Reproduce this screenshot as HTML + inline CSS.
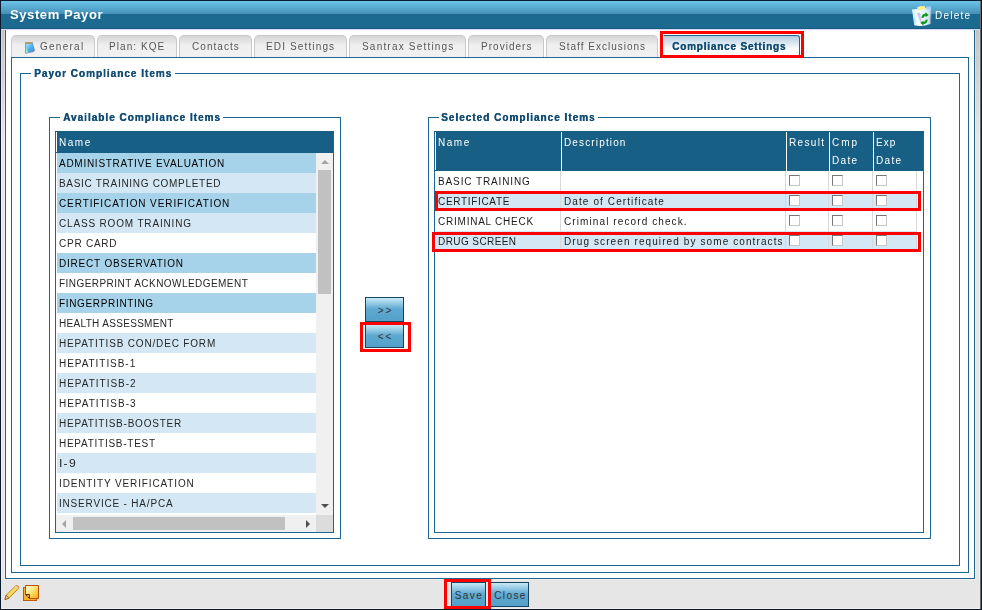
<!DOCTYPE html>
<html><head><meta charset="utf-8">
<style>
*{margin:0;padding:0;box-sizing:border-box}
html,body{width:982px;height:610px;overflow:hidden;background:#e8e8e8}
body{position:relative;font-family:"Liberation Sans",sans-serif;font-size:10px;color:#222}
.a{position:absolute}
.ln{position:absolute;background:#1d6690}
.txt{position:absolute;white-space:nowrap;line-height:12px;will-change:transform}
.up{letter-spacing:0.75px}
.lo{letter-spacing:1.1px}
.tab{position:absolute;top:35px;height:22px;border:1px solid #c9c9c9;border-bottom:none;border-radius:5px 5px 0 0;background:linear-gradient(#d6d6d6,#efefef 45%,#f1f1f1)}
.leg{font-weight:bold;color:#124d74;letter-spacing:1.0px;text-shadow:0.4px 0 0 #124d74}
.hdr{color:#fff;margin-top:1px;letter-spacing:1.2px}
.btn{position:absolute;border:1px solid #17445f;background:linear-gradient(#c8e9f7,#5ea9d1 48%,#55a0c9);color:#333;text-align:center;line-height:22px;letter-spacing:1.2px;white-space:nowrap}
.cb{position:absolute;width:11px;height:11px;border:1px solid #777;border-right-color:#c8c8c8;border-bottom-color:#c8c8c8;background:#fff}
.tabt{color:#555;letter-spacing:1.15px}
</style></head><body>
<!-- outer dark frame -->
<div class="a" style="left:0;top:0;width:982px;height:610px;background:#e6e6e6;border:1px solid #0a1a30"></div>
<div class="a" style="left:980px;top:1px;width:1px;height:608px;background:#6a6a6a"></div>
<div class="a" style="left:1px;top:608px;width:979px;height:1px;background:#f3f1ee"></div>
<!-- title bar -->
<div class="a" style="left:1px;top:1px;width:979px;height:13px;background:linear-gradient(#6cc4e8,#4590b8)"></div>
<div class="a" style="left:1px;top:14px;width:979px;height:14px;background:#1c6a8f"></div>
<div class="a" style="left:1px;top:28px;width:979px;height:1px;background:#155c80"></div>
<div class="a" style="left:1px;top:29px;width:979px;height:1px;background:#d0d8ff"></div>
<div class="txt" style="left:10px;top:9px;font-size:12px;font-weight:bold;color:#fff;letter-spacing:0.5px;line-height:12px;transform:scaleX(1.09);transform-origin:0 0">System Payor</div>
<div class="txt" style="left:935px;top:10px;font-size:10px;color:#fff;letter-spacing:1.25px">Delete</div>

<!-- side strips -->
<div class="a" style="left:1px;top:30px;width:4px;height:550px;background:linear-gradient(#c4c4c4,#e6e6e6 110px)"></div>
<div class="a" style="left:1px;top:30px;width:1px;height:550px;background:linear-gradient(#d8d4d0,#f5f3f0 110px)"></div>
<div class="a" style="left:4px;top:30px;width:1px;height:550px;background:linear-gradient(#d8d4d0,#f3efec 110px)"></div>
<div class="a" style="left:975px;top:30px;width:5px;height:550px;background:linear-gradient(#c4c4c4,#e6e6e6 110px)"></div>
<div class="a" style="left:975px;top:30px;width:1px;height:550px;background:linear-gradient(#d8d4d0,#f3efec 110px)"></div>
<div class="a" style="left:979px;top:30px;width:1px;height:550px;background:linear-gradient(#d0d0d0,#f0f0f0 110px)"></div>
<!-- white container -->
<div class="a" style="left:5px;top:30px;width:970px;height:549px;background:#fff;border-left:1px solid #1d6690;border-right:1px solid #1d6690;border-bottom:1px solid #1d6690"></div>
<div class="a" style="left:4px;top:579px;width:972px;height:1px;background:#f3efec"></div>

<!-- tabs -->
<div class="tab" style="left:11px;width:84px"></div>
<div class="txt tabt" style="left:40px;top:41px;letter-spacing:1.26px">General</div>
<div class="tab" style="left:97px;width:80px"></div>
<div class="txt tabt" style="left:109px;top:41px;letter-spacing:1.06px">Plan: KQE</div>
<div class="tab" style="left:179px;width:73px"></div>
<div class="txt tabt" style="left:192px;top:41px;letter-spacing:1.05px">Contacts</div>
<div class="tab" style="left:254px;width:93px"></div>
<div class="txt tabt" style="left:266px;top:41px;letter-spacing:1.14px">EDI Settings</div>
<div class="tab" style="left:349px;width:117px"></div>
<div class="txt tabt" style="left:362px;top:41px;letter-spacing:1.20px">Santrax Settings</div>
<div class="tab" style="left:468px;width:76px"></div>
<div class="txt tabt" style="left:481px;top:41px;letter-spacing:1.03px">Providers</div>
<div class="tab" style="left:546px;width:112px"></div>
<div class="txt tabt" style="left:559px;top:41px;letter-spacing:1.01px">Staff Exclusions</div>
<div class="a" style="left:20px;top:38px;width:20px;height:20px"><svg width="20" height="20" viewBox="0 0 20 20">
<defs><linearGradient id="gi" x1="0" y1="0" x2="1" y2="1"><stop offset="0" stop-color="#a8ecff"/><stop offset="0.5" stop-color="#4cb0ec"/><stop offset="1" stop-color="#3a88d8"/></linearGradient></defs>
<path d="M5 4.5 L12.5 4.2 L15 12.5 L13.5 14 L5.2 15.8 Z" fill="#7088b8"/>
<path d="M5.8 5.6 L12.2 5.6 L14.3 12.6 L6 15 Z" fill="url(#gi)"/>
<path d="M5.8 9 L8.5 14.6 L6 15 Z" fill="#b8f0c0" opacity="0.8"/>
<rect x="5.5" y="4" width="7" height="1.8" fill="#b09a68"/>
</svg></div>
<div class="a" style="left:11px;top:57px;width:958px;height:516px;border:1px solid #1d6690;border-top-color:#1d6690"></div>
<div class="a" style="left:663px;top:35px;width:137px;height:23px;border:1px solid #1d6690;border-bottom:none;border-left-color:#fff;border-radius:0 3px 0 0;background:linear-gradient(#b5cde0,#fff 62%)"></div>
<div class="txt" style="left:672px;top:41px;font-weight:bold;color:#124d74;letter-spacing:0.8px;text-shadow:0.4px 0 0 #124d74">Compliance Settings</div>
<div class="a" style="left:660px;top:31px;width:144px;height:27px;border:3px solid #f00"></div>

<!-- fieldsets -->
<div class="a" style="left:20px;top:73px;width:940px;height:493px;border:1px solid #1d6690;border-top:none"></div>
<div class="ln" style="left:20px;top:73px;width:11px;height:1px"></div>
<div class="ln" style="left:175px;top:73px;width:785px;height:1px"></div>
<div class="txt leg" style="left:34px;top:68px">Payor Compliance Items</div>
<div class="a" style="left:49px;top:117px;width:292px;height:422px;border:1px solid #1d6690;border-top:none"></div>
<div class="ln" style="left:49px;top:117px;width:11px;height:1px"></div>
<div class="ln" style="left:223px;top:117px;width:118px;height:1px"></div>
<div class="txt leg" style="left:63px;top:112px">Available Compliance Items</div>
<div class="a" style="left:428px;top:117px;width:503px;height:422px;border:1px solid #1d6690;border-top:none"></div>
<div class="ln" style="left:428px;top:117px;width:11px;height:1px"></div>
<div class="ln" style="left:598px;top:117px;width:333px;height:1px"></div>
<div class="txt leg" style="left:441px;top:112px">Selected Compliance Items</div>

<!-- available table -->
<div class="a" style="left:55px;top:131px;width:279px;height:402px;border:1px solid #1d6690;background:#fff"></div>
<div class="a" style="left:56px;top:131px;width:277px;height:22px;background:#175f85"></div>
<div class="a" style="left:56px;top:132px;width:1px;height:20px;background:#fff"></div>
<div class="txt hdr" style="left:59px;top:136px;letter-spacing:1.53px">Name</div>
<div class="a" style="left:57px;top:153px;width:259px;height:20px;background:#a6d2ea"></div>
<div class="txt up" style="left:59px;top:158px;color:#000;letter-spacing:0.73px">ADMINISTRATIVE EVALUATION</div>
<div class="a" style="left:57px;top:173px;width:259px;height:20px;background:#d3e8f4"></div>
<div class="txt up" style="left:59px;top:178px;color:#262626;letter-spacing:0.7px">BASIC TRAINING COMPLETED</div>
<div class="a" style="left:57px;top:193px;width:259px;height:20px;background:#a6d2ea"></div>
<div class="txt up" style="left:59px;top:198px;color:#000;letter-spacing:0.9px">CERTIFICATION VERIFICATION</div>
<div class="a" style="left:57px;top:213px;width:259px;height:20px;background:#d3e8f4"></div>
<div class="txt up" style="left:59px;top:218px;color:#262626;letter-spacing:0.83px">CLASS ROOM TRAINING</div>
<div class="a" style="left:57px;top:233px;width:259px;height:20px;background:#fff"></div>
<div class="txt up" style="left:59px;top:238px;color:#262626;letter-spacing:0.76px">CPR CARD</div>
<div class="a" style="left:57px;top:253px;width:259px;height:20px;background:#a6d2ea"></div>
<div class="txt up" style="left:59px;top:258px;color:#000;letter-spacing:0.8px">DIRECT OBSERVATION</div>
<div class="a" style="left:57px;top:273px;width:259px;height:20px;background:#fff"></div>
<div class="txt up" style="left:59px;top:278px;color:#262626;letter-spacing:0.45px">FINGERPRINT ACKNOWLEDGEMENT</div>
<div class="a" style="left:57px;top:293px;width:259px;height:20px;background:#a6d2ea"></div>
<div class="txt up" style="left:59px;top:298px;color:#000;letter-spacing:0.66px">FINGERPRINTING</div>
<div class="a" style="left:57px;top:313px;width:259px;height:20px;background:#fff"></div>
<div class="txt up" style="left:59px;top:318px;color:#262626;letter-spacing:0.32px">HEALTH ASSESSMENT</div>
<div class="a" style="left:57px;top:333px;width:259px;height:20px;background:#d3e8f4"></div>
<div class="txt up" style="left:59px;top:338px;color:#262626;letter-spacing:0.83px">HEPATITISB CON/DEC FORM</div>
<div class="a" style="left:57px;top:353px;width:259px;height:20px;background:#fff"></div>
<div class="txt up" style="left:59px;top:358px;color:#262626;letter-spacing:0.95px">HEPATITISB-1</div>
<div class="a" style="left:57px;top:373px;width:259px;height:20px;background:#d3e8f4"></div>
<div class="txt up" style="left:59px;top:378px;color:#262626;letter-spacing:0.99px">HEPATITISB-2</div>
<div class="a" style="left:57px;top:393px;width:259px;height:20px;background:#fff"></div>
<div class="txt up" style="left:59px;top:398px;color:#262626;letter-spacing:0.98px">HEPATITISB-3</div>
<div class="a" style="left:57px;top:413px;width:259px;height:20px;background:#d3e8f4"></div>
<div class="txt up" style="left:59px;top:418px;color:#262626;letter-spacing:0.77px">HEPATITISB-BOOSTER</div>
<div class="a" style="left:57px;top:433px;width:259px;height:20px;background:#fff"></div>
<div class="txt up" style="left:59px;top:438px;color:#262626;letter-spacing:0.74px">HEPATITISB-TEST</div>
<div class="a" style="left:57px;top:453px;width:259px;height:20px;background:#d3e8f4"></div>
<div class="txt up" style="left:59px;top:458px;color:#262626;letter-spacing:1px;transform:scaleX(1.22);transform-origin:0 0">I-9</div>
<div class="a" style="left:57px;top:473px;width:259px;height:20px;background:#fff"></div>
<div class="txt up" style="left:59px;top:478px;color:#262626;letter-spacing:0.87px">IDENTITY VERIFICATION</div>
<div class="a" style="left:57px;top:493px;width:259px;height:20px;background:#d3e8f4"></div>
<div class="txt up" style="left:59px;top:498px;color:#262626;letter-spacing:0.81px">INSERVICE - HA/PCA</div>
<div class="a" style="left:316px;top:153px;width:17px;height:362px;background:#f0f0f0"></div>
<div class="a" style="left:318px;top:170px;width:13px;height:124px;background:#c1c1c1"></div>
<div class="a" style="left:321px;top:160px;width:0;height:0;border-left:4px solid transparent;border-right:4px solid transparent;border-bottom:4px solid #a3a3a3"></div>
<div class="a" style="left:321px;top:504px;width:0;height:0;border-left:4px solid transparent;border-right:4px solid transparent;border-top:4px solid #505050"></div>
<div class="a" style="left:56px;top:513px;width:260px;height:2px;background:#fff"></div>
<div class="a" style="left:56px;top:515px;width:260px;height:17px;background:#f0f0f0"></div>
<div class="a" style="left:73px;top:517px;width:212px;height:13px;background:#c1c1c1"></div>
<div class="a" style="left:62px;top:520px;width:0;height:0;border-top:4px solid transparent;border-bottom:4px solid transparent;border-right:4px solid #a3a3a3"></div>
<div class="a" style="left:306px;top:520px;width:0;height:0;border-top:4px solid transparent;border-bottom:4px solid transparent;border-left:4px solid #505050"></div>
<div class="a" style="left:316px;top:515px;width:17px;height:17px;background:#dcdcdc"></div>

<!-- move buttons -->
<div class="btn" style="left:365px;top:297px;width:39px;height:25px;padding-top:2px;letter-spacing:2px;text-indent:2px">&gt;&gt;</div>
<div class="btn" style="left:365px;top:324px;width:39px;height:24px;padding-top:1px;letter-spacing:2px;text-indent:2px">&lt;&lt;</div>
<div class="a" style="left:360px;top:322px;width:51px;height:30px;border:3px solid #f00"></div>

<!-- selected table -->
<div class="a" style="left:434px;top:131px;width:490px;height:402px;border:1px solid #1d6690;background:#fff"></div>
<div class="a" style="left:435px;top:131px;width:488px;height:40px;background:#175f85"></div>
<div class="a" style="left:435px;top:132px;width:1px;height:38px;background:#fff"></div>
<div class="a" style="left:561px;top:132px;width:1px;height:39px;background:#fff"></div>
<div class="a" style="left:786px;top:132px;width:1px;height:39px;background:#fff"></div>
<div class="a" style="left:829px;top:132px;width:1px;height:39px;background:#fff"></div>
<div class="a" style="left:873px;top:132px;width:1px;height:39px;background:#fff"></div>
<div class="txt hdr" style="left:438px;top:136px;letter-spacing:1.53px">Name</div>
<div class="txt hdr" style="left:564px;top:136px;letter-spacing:1.14px">Description</div>
<div class="txt hdr" style="left:789px;top:136px;letter-spacing:1.35px">Result</div>
<div class="txt hdr" style="left:832px;top:136px;letter-spacing:1.97px">Cmp</div>
<div class="txt hdr" style="left:832px;top:154px;letter-spacing:1.31px">Date</div>
<div class="txt hdr" style="left:876px;top:136px;letter-spacing:1.07px">Exp</div>
<div class="txt hdr" style="left:876px;top:154px;letter-spacing:1.31px">Date</div>
<div class="a" style="left:436px;top:171px;width:481px;height:20px;background:#fff"></div>
<div class="a" style="left:560px;top:171px;width:1px;height:20px;background:#d9d9d9"></div>
<div class="a" style="left:785px;top:171px;width:1px;height:20px;background:#d9d9d9"></div>
<div class="a" style="left:828px;top:171px;width:1px;height:20px;background:#d9d9d9"></div>
<div class="a" style="left:872px;top:171px;width:1px;height:20px;background:#d9d9d9"></div>
<div class="a" style="left:916px;top:171px;width:1px;height:20px;background:#d9d9d9"></div>
<div class="txt up" style="left:438px;top:176px;color:#1a1a1a;letter-spacing:0.88px">BASIC TRAINING</div>
<div class="cb" style="left:789px;top:175px"></div>
<div class="cb" style="left:832px;top:175px"></div>
<div class="cb" style="left:876px;top:175px"></div>
<div class="a" style="left:436px;top:191px;width:481px;height:20px;background:#d3e8f4"></div>
<div class="a" style="left:560px;top:191px;width:1px;height:20px;background:#d9d9d9"></div>
<div class="a" style="left:785px;top:191px;width:1px;height:20px;background:#d9d9d9"></div>
<div class="a" style="left:828px;top:191px;width:1px;height:20px;background:#d9d9d9"></div>
<div class="a" style="left:872px;top:191px;width:1px;height:20px;background:#d9d9d9"></div>
<div class="a" style="left:916px;top:191px;width:1px;height:20px;background:#d9d9d9"></div>
<div class="txt up" style="left:438px;top:196px;color:#1a1a1a;letter-spacing:0.68px">CERTIFICATE</div>
<div class="txt lo" style="left:564px;top:196px;color:#1a1a1a">Date of Certificate</div>
<div class="cb" style="left:789px;top:195px"></div>
<div class="cb" style="left:832px;top:195px"></div>
<div class="cb" style="left:876px;top:195px"></div>
<div class="a" style="left:436px;top:211px;width:481px;height:20px;background:#fff"></div>
<div class="a" style="left:560px;top:211px;width:1px;height:20px;background:#d9d9d9"></div>
<div class="a" style="left:785px;top:211px;width:1px;height:20px;background:#d9d9d9"></div>
<div class="a" style="left:828px;top:211px;width:1px;height:20px;background:#d9d9d9"></div>
<div class="a" style="left:872px;top:211px;width:1px;height:20px;background:#d9d9d9"></div>
<div class="a" style="left:916px;top:211px;width:1px;height:20px;background:#d9d9d9"></div>
<div class="txt up" style="left:438px;top:216px;color:#1a1a1a;letter-spacing:0.77px">CRIMINAL CHECK</div>
<div class="txt lo" style="left:564px;top:216px;color:#1a1a1a">Criminal record check.</div>
<div class="cb" style="left:789px;top:215px"></div>
<div class="cb" style="left:832px;top:215px"></div>
<div class="cb" style="left:876px;top:215px"></div>
<div class="a" style="left:436px;top:231px;width:481px;height:20px;background:#d3e8f4"></div>
<div class="a" style="left:560px;top:231px;width:1px;height:20px;background:#d9d9d9"></div>
<div class="a" style="left:785px;top:231px;width:1px;height:20px;background:#d9d9d9"></div>
<div class="a" style="left:828px;top:231px;width:1px;height:20px;background:#d9d9d9"></div>
<div class="a" style="left:872px;top:231px;width:1px;height:20px;background:#d9d9d9"></div>
<div class="a" style="left:916px;top:231px;width:1px;height:20px;background:#d9d9d9"></div>
<div class="txt up" style="left:438px;top:236px;color:#1a1a1a;letter-spacing:0.42px">DRUG SCREEN</div>
<div class="txt lo" style="left:564px;top:236px;color:#1a1a1a">Drug screen required by some contracts</div>
<div class="cb" style="left:789px;top:235px"></div>
<div class="cb" style="left:832px;top:235px"></div>
<div class="cb" style="left:876px;top:235px"></div>
<div class="a" style="left:435px;top:191px;width:486px;height:20px;border:3px solid #f00"></div>
<div class="a" style="left:432px;top:232px;width:489px;height:20px;border:3px solid #f00"></div>

<!-- footer -->
<div class="btn" style="left:451px;top:582px;width:35px;height:25px;padding-top:2px;letter-spacing:1.4px;text-indent:1px">Save</div>
<div class="btn" style="left:490px;top:582px;width:39px;height:25px;padding-top:2px;letter-spacing:1.4px;text-indent:2px">Close</div>
<div class="a" style="left:444px;top:579px;width:47px;height:30px;border:3px solid #f00"></div>
<!-- pencil icon -->
<div class="a" style="left:3px;top:584px;width:17px;height:17px"><svg width="17" height="17" viewBox="0 0 17 17">
<defs><linearGradient id="pg" x1="0" y1="0" x2="1" y2="1"><stop offset="0" stop-color="#fff6a0"/><stop offset="1" stop-color="#e8b820"/></linearGradient></defs>
<path d="M2 15.5 L3.2 11.2 L12.5 1.9 Q14 1 15.3 2.3 Q16.2 3.6 15.2 4.9 L5.9 14.2 Z" fill="url(#pg)" stroke="#c8801a" stroke-width="1"/>
<path d="M12.3 2.2 L15 4.9" stroke="#f0c8a0" stroke-width="2"/>
<path d="M2 15.5 L3.2 11.2 L5.9 14.2 Z" fill="#f6d0b0" stroke="#8a5010" stroke-width="0.8"/>
</svg></div>
<!-- notes icon -->
<div class="a" style="left:22px;top:584px;width:19px;height:18px"><svg width="19" height="18" viewBox="0 0 19 18">
<defs><linearGradient id="ng" x1="0" y1="0" x2="1" y2="1"><stop offset="0" stop-color="#fffce0"/><stop offset="0.5" stop-color="#ffe070"/><stop offset="1" stop-color="#ffa800"/></linearGradient></defs>
<rect x="1.5" y="3.5" width="13" height="13" fill="#ffb020" stroke="#c05a00" stroke-width="1"/>
<path d="M3.5 1.5 H16.5 V14.5 H7.5 L3.5 10.5 Z" fill="url(#ng)" stroke="#b85000" stroke-width="1"/>
<path d="M3.5 10.5 H7.5 V14.5 Z" fill="#ffa000" stroke="#603000" stroke-width="1"/>
<circle cx="5.3" cy="12.3" r="0.9" fill="#8080ff"/>
</svg></div>
<!-- trash icon -->
<div class="a" style="left:906px;top:2px;width:30px;height:26px"><svg width="30" height="26" viewBox="0 0 30 26">
<defs><linearGradient id="tg" x1="0" y1="0" x2="1" y2="0"><stop offset="0" stop-color="#d8f6ff"/><stop offset="0.4" stop-color="#f8fdff"/><stop offset="0.75" stop-color="#d8eefa"/><stop offset="1" stop-color="#a8d4f0"/></linearGradient></defs>
<path d="M6 7.5 L25.5 5.5 L24.3 22 Q16 25 8.3 23.2 Z" fill="url(#tg)"/>
<path d="M25.5 5.5 L24.3 22" stroke="#8a8fa0" stroke-width="0.9" fill="none"/>
<path d="M11 5.5 Q14 3.5 19 4.2 L19.5 7.5 L12 8.5 Z" fill="#f6ee9a"/>
<path d="M20 4.5 L25 4.2 L24.8 7 L20.5 7.5 Z" fill="#9cd0ff"/>
<path d="M11 11 L14 10.5 L16 21 L14.5 21 Z" fill="#c8b8ec" opacity="0.8"/>
<path d="M7 8 L10 21 L8.5 22.5 Z" fill="#a8dcf6" opacity="0.8"/>
<g transform="translate(-5,0.5) scale(1.05)" transform-origin="23 16"><path d="M20.5 15.2 Q21 11.6 24.5 11.2 L24.5 10 L27.3 12.6 L24.5 14.8 L24.5 13.4 Q22.6 13.6 22.4 15.5 Z" fill="#0a9a18"/>
<path d="M26.6 17.2 Q26 21 22.4 21.5 L22.4 22.7 L19.6 20.2 L22.4 17.8 L22.4 19.3 Q24.4 19.1 24.7 17 Z" fill="#0a9a18"/></g>
</svg></div>
</body></html>
